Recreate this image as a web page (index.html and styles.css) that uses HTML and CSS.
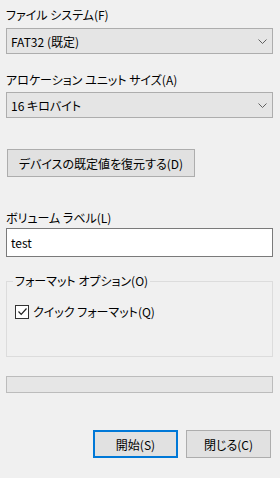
FILE: index.html
```html
<!DOCTYPE html>
<html lang="ja">
<head>
  <meta charset="UTF-8">
  <title>フォーマット</title>
  <link rel="stylesheet" href="styles.css">
</head>
<body>

<div class="dialog">
  <div class="field">
    <div class="label">ファイル システム(F)</div>
    <div class="select">
      <span>FAT32 (既定)</span>
      <svg class="chevron" width="9" height="5" viewBox="0 0 9 5"><path d="M0.5 0.5 L4.5 4.5 L8.5 0.5" fill="none" stroke="#606060" stroke-width="1"/></svg>
    </div>
  </div>

  <div class="field">
    <div class="label">アロケーション ユニット サイズ(A)</div>
    <div class="select">
      <span>16 キロバイト</span>
      <svg class="chevron" width="9" height="5" viewBox="0 0 9 5"><path d="M0.5 0.5 L4.5 4.5 L8.5 0.5" fill="none" stroke="#606060" stroke-width="1"/></svg>
    </div>
  </div>

  <button class="btn restore-btn">デバイスの既定値を復元する(D)</button>

  <div class="field volume">
    <div class="label">ボリューム ラベル(L)</div>
    <div class="textbox">test</div>
  </div>

  <div class="group">
    <div class="legend">フォーマット オプション(O)</div>
    <div class="check-row">
      <span class="checkbox">
        <svg width="11" height="11" viewBox="0 0 11 11"><path d="M1.5 5.5 L4.2 8.3 L9.5 2.5" fill="none" stroke="#222" stroke-width="1.2"/></svg>
      </span>
      <span>クイック フォーマット(Q)</span>
    </div>
  </div>

  <div class="progress"></div>

  <div class="actions">
    <button class="btn default-btn">開始(S)</button>
    <button class="btn">閉じる(C)</button>
  </div>
</div>

</body>
</html>
```

FILE: styles.css
```css
body {
  margin: 0;
  padding: 0;
  background-color: #f0f0f0;
  font-family: "Noto Sans CJK JP", "Noto Sans", sans-serif;
  font-size: 12px;
  color: #000;
  font-feature-settings: "palt";
}

.dialog {
  width: 267px;
  padding: 7px 0 0 6px;
}

.label {
  height: 16px;
  line-height: 16px;
  margin-bottom: 5px;
}

.field {
  margin-bottom: 18px;
}

.field + .field .label {
  margin-bottom: 4px;
}

.select {
  height: 24px;
  border: 1px solid #adadad;
  background-color: #e5e5e5;
  display: flex;
  align-items: center;
  justify-content: space-between;
  padding: 0 5px 0 4px;
}

.chevron {
  display: block;
}

.btn {
  font-family: inherit;
  font-size: 12px;
  font-feature-settings: "palt";
  color: #000;
  background-color: #e1e1e1;
  border: 1px solid #adadad;
  height: 28px;
  padding: 0;
  margin: 0;
}

.restore-btn {
  display: block;
  width: 188px;
  margin: 31px 0 0 1px;
}

.volume {
  margin-top: 33px;
  margin-bottom: 0;
}

.volume .label {
  margin-bottom: 2px;
}

.textbox {
  height: 27px;
  line-height: 27px;
  border: 1px solid #7a7a7a;
  background-color: #fff;
  padding: 0 4px;
}

.group {
  margin-top: 24px;
  height: 74px;
  border: 1px solid #dcdcdc;
  position: relative;
  padding: 0 8px;
}

.legend {
  position: absolute;
  top: -9px;
  left: 6px;
  padding: 0 2px;
  line-height: 16px;
  background-color: #f0f0f0;
}

.check-row {
  display: flex;
  align-items: center;
  gap: 4px;
  margin-top: 21px;
}

.checkbox {
  width: 12px;
  height: 12px;
  border: 1px solid #333;
  background-color: #fff;
  display: flex;
  align-items: center;
  justify-content: center;
}

.checkbox svg {
  display: block;
}

.progress {
  margin-top: 19px;
  height: 15px;
  border: 1px solid #bcbcbc;
  background-color: #e6e6e6;
}

.actions {
  display: flex;
  justify-content: flex-end;
  gap: 8px;
  margin-top: 37px;
  padding-right: 2px;
}

.actions .btn {
  width: 85px;
}

.default-btn {
  border: 2px solid #0078d7;
}
```
